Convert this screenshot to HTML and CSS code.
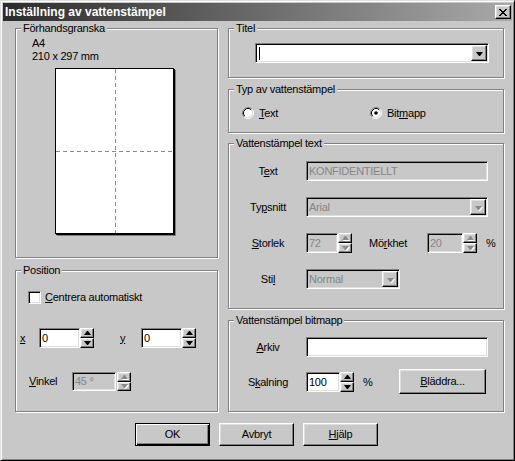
FILE: index.html
```html
<!DOCTYPE html>
<html lang="sv">
<head>
<meta charset="utf-8">
<title>Inställning av vattenstämpel</title>
<link rel="stylesheet" href="styles.css">
</head>
<body>
<div class="window">
  <div class="titlebar">
    <span class="title">Inställning av vattenstämpel</span>
    <span class="close raised"><svg width="8" height="7" viewBox="0 0 8 7"><path d="M0 0h2v1H0zM6 0h2v1H6zM1 1h2v1H1zM5 1h2v1H5zM2 2h4v1H2zM3 3h2v1H3zM2 4h4v1H2zM1 5h2v1H1zM5 5h2v1H5zM0 6h2v1H0zM6 6h2v1H6z" fill="#000"/></svg></span>
  </div>

  <div class="content">
    <div class="col col-left">
      <div class="group g-preview">
        <span class="legend">Förhandsgranska</span>
        <div class="paper-info">A4<br>210 x 297 mm</div>
        <div class="paper"></div>
      </div>

      <div class="group g-position">
        <span class="legend">Position</span>
        <div class="row row-check">
          <span class="checkbox"></span>
          <span class="check-label"><u>C</u>entrera automatiskt</span>
        </div>
        <div class="row row-xy">
          <span class="lbl lbl-x"><u>x</u></span>
          <span class="field f-xy">0</span>
          <span class="spin"><span class="spin-btn up"></span><span class="spin-btn down"></span></span>
          <span class="lbl lbl-y"><u>y</u></span>
          <span class="field f-xy">0</span>
          <span class="spin"><span class="spin-btn up"></span><span class="spin-btn down"></span></span>
        </div>
        <div class="row row-vinkel">
          <span class="lbl lbl-vinkel"><u>V</u>inkel</span>
          <span class="field disabled f-vinkel">45 °</span>
          <span class="spin spin-vinkel disabled"><span class="spin-btn up"></span><span class="spin-btn down"></span></span>
        </div>
      </div>
    </div>

    <div class="col col-right">
      <div class="group g-titel">
        <span class="legend">Titel</span>
        <div class="field combo c-titel"><span class="caret"></span><span class="drop raised"></span></div>
      </div>

      <div class="group g-typ">
        <span class="legend">Typ av vattenstämpel</span>
        <div class="row radios">
          <span class="radio-item r-text">
            <svg class="radio" width="12" height="12" viewBox="0 0 12 12"><circle cx="6" cy="6" r="4.5" fill="#fff"/><path d="M2.11 9.89A5.5 5.5 0 0 1 9.89 2.11" stroke="#808080" fill="none"/><path d="M9.89 2.11A5.5 5.5 0 0 1 2.11 9.89" stroke="#fff" fill="none"/><path d="M2.82 9.18A4.5 4.5 0 0 1 9.18 2.82" stroke="#000" fill="none"/><path d="M9.18 2.82A4.5 4.5 0 0 1 2.82 9.18" stroke="#dfdfdf" fill="none"/></svg>
            <span class="radio-label"><u>T</u>ext</span>
          </span>
          <span class="radio-item">
            <svg class="radio" width="12" height="12" viewBox="0 0 12 12"><circle cx="6" cy="6" r="4.5" fill="#fff"/><path d="M2.11 9.89A5.5 5.5 0 0 1 9.89 2.11" stroke="#808080" fill="none"/><path d="M9.89 2.11A5.5 5.5 0 0 1 2.11 9.89" stroke="#fff" fill="none"/><path d="M2.82 9.18A4.5 4.5 0 0 1 9.18 2.82" stroke="#000" fill="none"/><path d="M9.18 2.82A4.5 4.5 0 0 1 2.82 9.18" stroke="#dfdfdf" fill="none"/><circle cx="6" cy="6" r="1.8" fill="#000"/></svg>
            <span class="radio-label">Bit<u>m</u>app</span>
          </span>
        </div>
      </div>

      <div class="group g-vtext">
        <span class="legend">Vattenstämpel text</span>
        <div class="vrow vr1">
          <span class="vlabel">T<u>e</u>xt</span>
          <span class="field disabled f-wide">KONFIDENTIELLT</span>
        </div>
        <div class="vrow">
          <span class="vlabel">Ty<u>p</u>snitt</span>
          <span class="field combo disabled f-wide"><span class="ctext">Arial</span><span class="drop raised disabled"></span></span>
        </div>
        <div class="vrow">
          <span class="vlabel"><u>S</u>torlek</span>
          <span class="field disabled f-storlek">72</span>
          <span class="spin disabled"><span class="spin-btn up"></span><span class="spin-btn down"></span></span>
          <span class="lbl lbl-mork">Mö<u>r</u>khet</span>
          <span class="field disabled f-mork">20</span>
          <span class="spin disabled"><span class="spin-btn up"></span><span class="spin-btn down"></span></span>
          <span class="pct">%</span>
        </div>
        <div class="vrow">
          <span class="vlabel">Sti<u>l</u></span>
          <span class="field combo disabled f-stil"><span class="ctext">Normal</span><span class="drop raised disabled"></span></span>
        </div>
      </div>

      <div class="group g-bitmap">
        <span class="legend">Vattenstämpel bitmapp</span>
        <div class="vrow br1">
          <span class="vlabel"><u>A</u>rkiv</span>
          <span class="field f-wide"></span>
        </div>
        <div class="brow">
          <span class="vlabel">S<u>k</u>alning</span>
          <span class="field f-skal">100</span>
          <span class="spin"><span class="spin-btn up"></span><span class="spin-btn down"></span></span>
          <span class="pct">%</span>
          <button class="btn btn-browse"><span><u>B</u>läddra...</span></button>
        </div>
      </div>
    </div>
  </div>

  <div class="buttons">
    <button class="btn default">OK</button>
    <button class="btn">Avbryt</button>
    <button class="btn"><span><u>H</u>jälp</span></button>
  </div>
</div>
</body>
</html>
```

FILE: styles.css
```css
* { box-sizing: border-box; }

html, body {
  margin: 0;
  padding: 0;
  background: #c8c8c8;
}

body {
  font-family: "Liberation Sans", Arial, sans-serif;
  font-size: 11px;
  letter-spacing: -0.25px;
  line-height: 13px;
  color: #000;
}

u { text-decoration: underline; text-underline-offset: 1px; }

.window {
  width: 515px;
  height: 461px;
  background: #c8c8c8;
  border: 1px solid;
  border-color: #dfdfdf #000 #000 #dfdfdf;
  box-shadow: inset 1px 1px #fff, inset -1px -1px #808080;
  padding: 2px;
  display: flex;
  flex-direction: column;
}

.raised {
  background: #c8c8c8;
  border: 1px solid;
  border-color: #fff #000 #000 #fff;
  box-shadow: inset -1px -1px #808080, inset 1px 1px #dfdfdf;
}

/* Title bar */
.titlebar {
  height: 18px;
  flex: none;
  background: linear-gradient(to right, #2c2c2c, #a9a9a9);
  display: flex;
  align-items: center;
  padding: 0 1px 0 2px;
  color: #fff;
}

.title {
  flex: 1;
  font-weight: bold;
  font-size: 12px;
  letter-spacing: 0;
}

.close {
  width: 16px;
  height: 14px;
  display: flex;
  align-items: center;
  justify-content: center;
}

/* Content */
.content {
  display: flex;
  gap: 10px;
  padding: 7px 8px 0 12px;
}

.col {
  display: flex;
  flex-direction: column;
}

.col-left { width: 203px; }
.col-right { width: 276px; }

.group {
  position: relative;
  border: 1px solid #808080;
  box-shadow: inset 1px 1px #fff, 1px 1px #fff;
}

.legend {
  position: absolute;
  top: -7px;
  left: 5px;
  padding: 0 2px;
  background: #c8c8c8;
  white-space: nowrap;
}

/* Preview */
.g-preview {
  height: 230px;
  padding: 8px 0 0 16px;
}

.paper {
  margin: 5px 0 0 23px;
  width: 119px;
  height: 166px;
  border: 1px solid #000;
  box-shadow: 1px 1px 0 #000, 2px 2px 0 #808080;
  background:
    repeating-linear-gradient(to bottom, #8a8a8a 0 4px, transparent 4px 7px) 59px 0 / 1px 100% no-repeat,
    repeating-linear-gradient(to right, #8a8a8a 0 4px, transparent 4px 7px) 0 82px / 100% 1px no-repeat,
    #fff;
}

/* Position */
.g-position {
  height: 142px;
  margin-top: 12px;
}

.row {
  display: flex;
  align-items: center;
}

.row-check {
  margin: 20px 0 0 12px;
  height: 13px;
}

.checkbox {
  width: 13px;
  height: 13px;
  background: #fff;
  border: 1px solid;
  border-color: #808080 #fff #fff #808080;
  box-shadow: inset 1px 1px #000, inset -1px -1px #dfdfdf;
}

.check-label { margin-left: 4px; }

.row-xy {
  margin-top: 24px;
  height: 20px;
  padding-left: 4px;
}

.lbl-x { width: 19px; }
.lbl-y { width: 21px; margin-left: 26px; }

.row-vinkel {
  margin-top: 24px;
  height: 19px;
  padding-left: 13px;
}

.lbl-vinkel { width: 43px; }

/* Fields */
.field {
  height: 20px;
  background: #fff;
  border: 1px solid;
  border-color: #808080 #fff #fff #808080;
  box-shadow: inset 1px 1px #000, inset -1px -1px #dfdfdf;
  padding: 0 2px;
  display: flex;
  align-items: center;
  white-space: nowrap;
}

.field.disabled {
  background: #c8c8c8;
  color: #858585;
}

.f-xy { width: 41px; }
.f-vinkel { width: 44px; height: 19px; }
.f-wide { width: 182px; }
.f-storlek { width: 32px; }
.f-mork { width: 36px; }
.f-stil { width: 94px; }
.f-skal { width: 34px; }

.combo { padding-right: 1px; }
.combo .ctext { flex: 1; }

.caret {
  width: 1px;
  height: 13px;
  background: #000;
  margin-left: 1px;
}

.drop {
  width: 16px;
  height: 16px;
  margin-left: auto;
  display: flex;
  align-items: center;
  justify-content: center;
}

.drop::after {
  content: "";
  width: 1px;
  height: 0;
  border-left: 3px solid transparent;
  border-right: 3px solid transparent;
  border-top: 4px solid #000;
  margin-top: 1px;
}

.drop.disabled::after {
  border-top-color: #8a8a8a;
  filter: drop-shadow(1px 1px 0 #fff);
}

/* Spinners */
.spin {
  width: 14px;
  height: 20px;
  display: flex;
  flex-direction: column;
}

.spin-vinkel { height: 19px; margin-left: 1px; }

.spin-btn {
  flex: 1;
  background: #c8c8c8;
  border: 1px solid;
  border-color: #fff #000 #000 #fff;
  box-shadow: inset -1px -1px #808080, inset 1px 1px #dfdfdf;
  display: flex;
  align-items: center;
  justify-content: center;
}

.spin-btn::after {
  content: "";
  width: 1px;
  height: 0;
  border-left: 3px solid transparent;
  border-right: 3px solid transparent;
}

.spin-btn.up::after { border-bottom: 4px solid #000; }
.spin-btn.down::after { border-top: 4px solid #000; }

.spin.disabled .spin-btn.up::after { border-bottom-color: #8a8a8a; filter: drop-shadow(1px 1px 0 #fff); }
.spin.disabled .spin-btn.down::after { border-top-color: #8a8a8a; filter: drop-shadow(1px 1px 0 #fff); }

/* Right groups */
.g-titel {
  height: 50px;
  padding: 14px 0 0 26px;
}

.c-titel { width: 234px; }

.g-typ {
  height: 44px;
  margin-top: 11px;
}

.radios {
  margin: 17px 0 0 13px;
  height: 12px;
}

.radio-item {
  display: flex;
  align-items: center;
}

.r-text { width: 128px; }

.radio { display: block; flex: none; }

.radio-label { margin-left: 5px; }

.g-vtext {
  height: 166px;
  margin-top: 10px;
}

.vrow {
  display: flex;
  align-items: center;
  height: 20px;
  margin-top: 16px;
}

.vr1 { margin-top: 17px; }

.vlabel {
  width: 64px;
  margin: 0 6px 0 7px;
  text-align: center;
}

.lbl-mork { width: 58px; margin-left: 17px; }

.pct { margin-left: 9px; }

.g-bitmap {
  height: 92px;
  margin-top: 11px;
}

.br1 { margin-top: 16px; }

.brow {
  display: flex;
  align-items: flex-start;
  height: 25px;
  margin-top: 12px;
}

.brow .vlabel,
.brow .field,
.brow .spin,
.brow .pct {
  margin-top: 3px;
}

.brow .vlabel,
.brow .pct { line-height: 20px; }

/* Buttons */
.btn {
  width: 75px;
  height: 23px;
  padding: 0;
  margin: 0;
  font: inherit;
  letter-spacing: inherit;
  color: #000;
  background: #c8c8c8;
  border: 1px solid;
  border-color: #fff #000 #000 #fff;
  box-shadow: inset -1px -1px #808080, inset 1px 1px #dfdfdf;
  display: flex;
  align-items: center;
  justify-content: center;
}

.btn.default {
  border: 1px solid #000;
  box-shadow: inset 1px 1px #fff, inset -1px -1px #000, inset -2px -2px #808080;
}

.btn-browse {
  width: 87px;
  height: 25px;
  margin-left: auto;
  margin-right: 17px;
}

.buttons {
  display: flex;
  gap: 9px;
  margin-top: 11px;
  padding-left: 132px;
}
```
